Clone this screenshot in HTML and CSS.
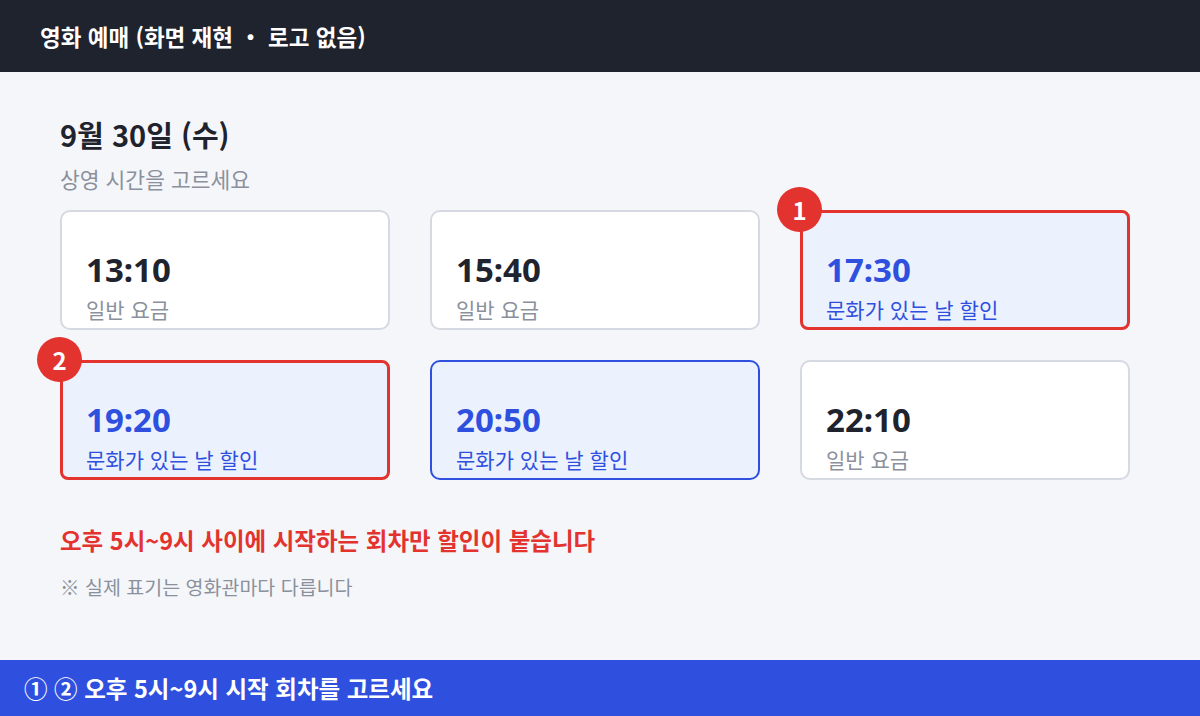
FILE: index.html
```html
<!DOCTYPE html>
<html lang="ko">
<head>
  <meta charset="UTF-8">
  <title>영화 예매</title>
  <meta name="viewport" content="width=device-width, initial-scale=1.0">
  <link rel="stylesheet" href="styles.css">
</head>
<body>
  <header class="top-bar">영화 예매 (화면 재현 ・ 로고 없음)</header>

  <main class="content">
    <h1 class="date">9월 30일 (수)</h1>
    <p class="hint">상영 시간을 고르세요</p>

    <div class="times">
      <div class="slot">
        <span class="slot-time">13:10</span>
        <span class="slot-label">일반 요금</span>
      </div>
      <div class="slot">
        <span class="slot-time">15:40</span>
        <span class="slot-label">일반 요금</span>
      </div>
      <div class="slot discount marked">
        <span class="badge">1</span>
        <span class="slot-time">17:30</span>
        <span class="slot-label">문화가 있는 날 할인</span>
      </div>
      <div class="slot discount marked">
        <span class="badge">2</span>
        <span class="slot-time">19:20</span>
        <span class="slot-label">문화가 있는 날 할인</span>
      </div>
      <div class="slot discount">
        <span class="slot-time">20:50</span>
        <span class="slot-label">문화가 있는 날 할인</span>
      </div>
      <div class="slot">
        <span class="slot-time">22:10</span>
        <span class="slot-label">일반 요금</span>
      </div>
    </div>

    <p class="warning">오후 5시~9시 사이에 시작하는 회차만 할인이 붙습니다</p>
    <p class="note">※ 실제 표기는 영화관마다 다릅니다</p>
  </main>

  <footer class="bottom-bar">① ② 오후 5시~9시 시작 회차를 고르세요</footer>
</body>
</html>
```

FILE: styles.css
```css
html, body {
  margin: 0;
  padding: 0;
  width: 100vw;
  height: 100vh;
  overflow: hidden;
  background: #f5f6fa;
  font-family: 'Noto Sans CJK KR', 'Noto Sans', sans-serif;
}
body {
  display: flex;
  flex-direction: column;
}
.top-bar {
  height: 72px;
  box-sizing: border-box;
  padding: 0 40px;
  display: flex;
  align-items: center;
  background: #1f232d;
  color: #fff;
  font-size: 22.5px;
  font-weight: 700;
}
.content {
  flex: 1;
  padding: 44px 60px 0 60px;
}
.date {
  margin: 0;
  font-size: 29px;
  font-weight: 700;
  color: #1f232d;
  line-height: 1.3;
}
.hint {
  margin: 10px 0 0 0;
  font-size: 21.5px;
  color: #8a919c;
  line-height: 1.4;
}
.times {
  margin-top: 16px;
  display: grid;
  grid-template-columns: repeat(3, 330px);
  column-gap: 40px;
  row-gap: 30px;
}
.slot {
  position: relative;
  height: 120px;
  box-sizing: border-box;
  padding: 0 24px 3px 24px;
  display: flex;
  flex-direction: column;
  justify-content: flex-end;
  background: #fff;
  border: 2px solid #d5d9e1;
  border-radius: 10px;
}
.slot-time {
  font-family: 'Noto Sans', 'Noto Sans CJK KR', sans-serif;
  font-size: 33px;
  font-weight: 700;
  color: #1f232d;
  line-height: 1.3;
  margin-bottom: 4px;
}
.slot-label {
  font-size: 21px;
  color: #8a919c;
  line-height: 1.4;
}
.slot.discount {
  background: #ebf2fe;
  border-color: #2f50df;
}
.slot.discount .slot-time,
.slot.discount .slot-label {
  color: #2f50df;
}
.slot.marked {
  border: 3px solid #e3332e;
  border-radius: 8px;
  padding: 0 23px 2px 23px;
}
.badge {
  position: absolute;
  top: -26px;
  left: -26px;
  width: 45px;
  height: 45px;
  border-radius: 50%;
  background: #e3332e;
  color: #fff;
  font-size: 24px;
  font-weight: 700;
  display: flex;
  align-items: center;
  justify-content: center;
}
.warning {
  margin: 44px 0 0 0;
  font-size: 23.5px;
  font-weight: 700;
  color: #e3332e;
  line-height: 1.4;
}
.note {
  margin: 16px 0 0 0;
  font-size: 19.5px;
  color: #8a919c;
  line-height: 1.4;
}
.bottom-bar {
  height: 56px;
  box-sizing: border-box;
  padding: 0 24px;
  display: flex;
  align-items: center;
  background: #2f50df;
  color: #fff;
  font-size: 23.5px;
  font-weight: 700;
}
```
